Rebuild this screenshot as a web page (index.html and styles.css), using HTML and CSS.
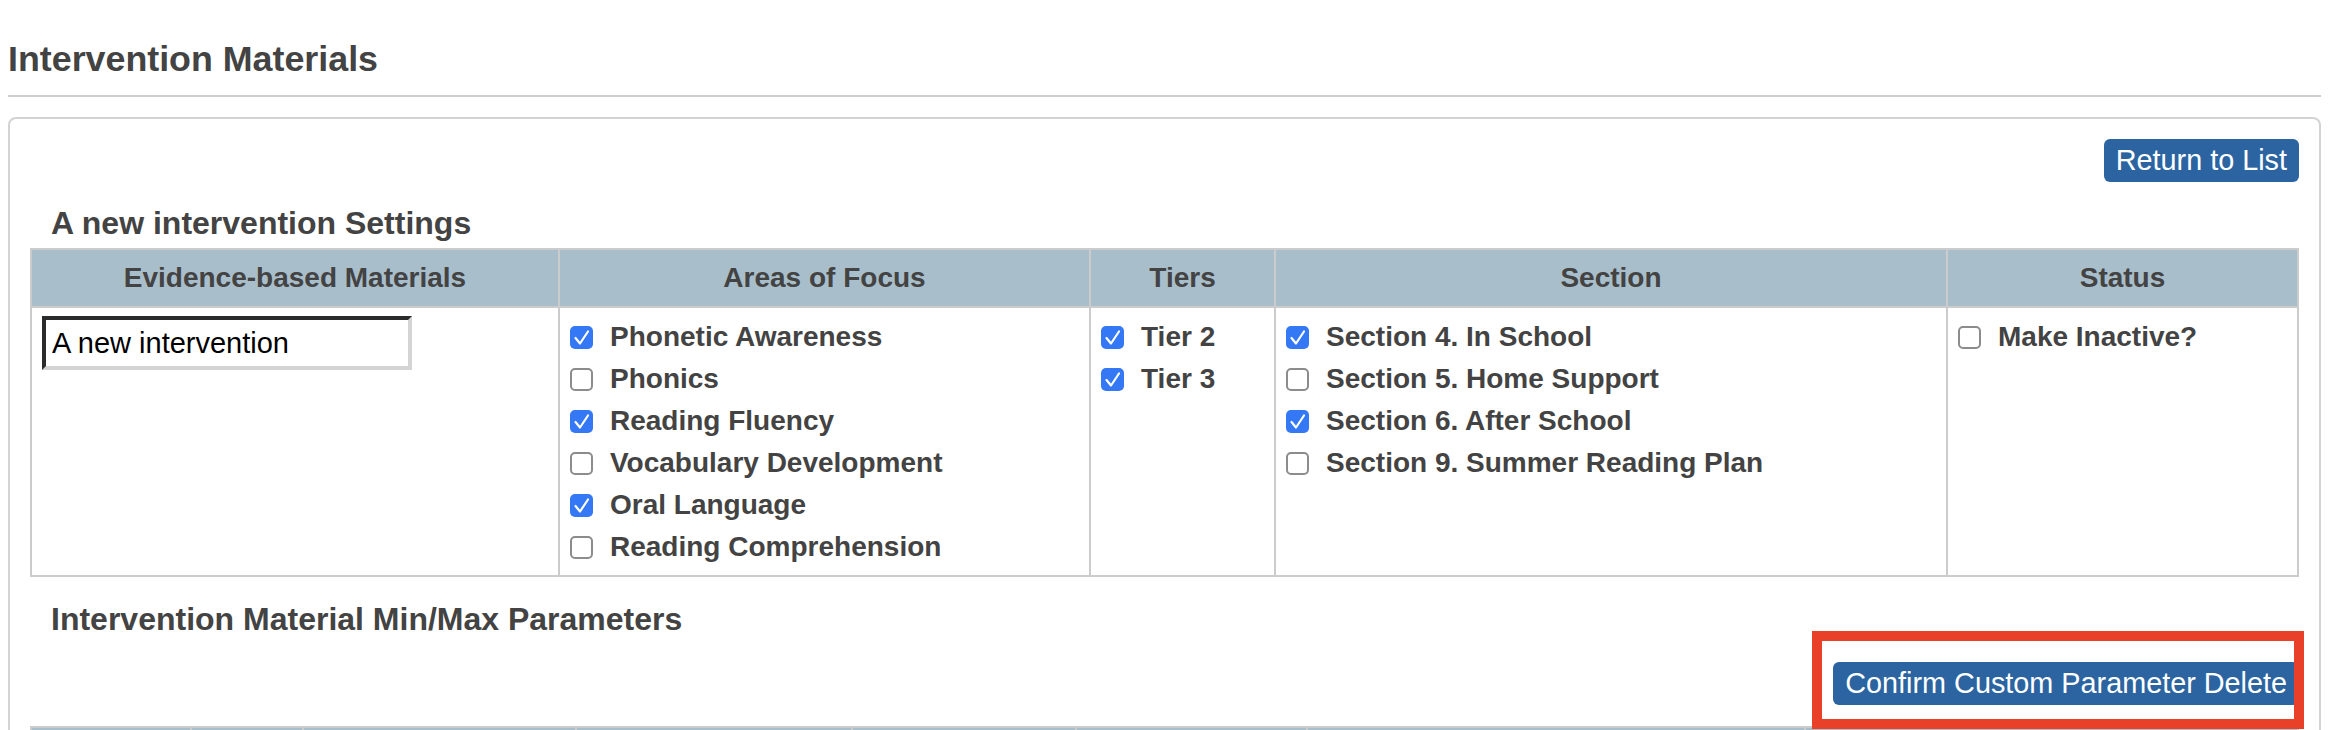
FILE: index.html
```html
<!DOCTYPE html>
<html lang="en">
<head>
<meta charset="utf-8">
<title>Intervention Materials</title>
<link rel="stylesheet" href="styles.css">
</head>
<body>
<div class="page">
  <h1 class="page-title">Intervention Materials</h1>
  <div class="panel">
    <div class="actions">
      <button class="btn" type="button">Return to List</button>
    </div>
    <h3 class="section-title first">A new intervention Settings</h3>
    <div class="grid settings">
      <div class="th">Evidence-based Materials</div>
      <div class="th">Areas of Focus</div>
      <div class="th">Tiers</div>
      <div class="th">Section</div>
      <div class="th">Status</div>

      <div class="td">
        <input class="name-input" type="text" value="A new intervention">
      </div>
      <div class="td">
        <ul class="checks">
          <li><span class="cb on"><svg viewBox="0 0 23 23"><path d="M5.5 12 L10 17.5 L18 5.5"/></svg></span><span class="lbl">Phonetic Awareness</span></li>
          <li><span class="cb"></span><span class="lbl">Phonics</span></li>
          <li><span class="cb on"><svg viewBox="0 0 23 23"><path d="M5.5 12 L10 17.5 L18 5.5"/></svg></span><span class="lbl">Reading Fluency</span></li>
          <li><span class="cb"></span><span class="lbl">Vocabulary Development</span></li>
          <li><span class="cb on"><svg viewBox="0 0 23 23"><path d="M5.5 12 L10 17.5 L18 5.5"/></svg></span><span class="lbl">Oral Language</span></li>
          <li><span class="cb"></span><span class="lbl">Reading Comprehension</span></li>
        </ul>
      </div>
      <div class="td">
        <ul class="checks">
          <li><span class="cb on"><svg viewBox="0 0 23 23"><path d="M5.5 12 L10 17.5 L18 5.5"/></svg></span><span class="lbl">Tier 2</span></li>
          <li><span class="cb on"><svg viewBox="0 0 23 23"><path d="M5.5 12 L10 17.5 L18 5.5"/></svg></span><span class="lbl">Tier 3</span></li>
        </ul>
      </div>
      <div class="td">
        <ul class="checks">
          <li><span class="cb on"><svg viewBox="0 0 23 23"><path d="M5.5 12 L10 17.5 L18 5.5"/></svg></span><span class="lbl">Section 4. In School</span></li>
          <li><span class="cb"></span><span class="lbl">Section 5. Home Support</span></li>
          <li><span class="cb on"><svg viewBox="0 0 23 23"><path d="M5.5 12 L10 17.5 L18 5.5"/></svg></span><span class="lbl">Section 6. After School</span></li>
          <li><span class="cb"></span><span class="lbl">Section 9. Summer Reading Plan</span></li>
        </ul>
      </div>
      <div class="td">
        <ul class="checks">
          <li><span class="cb"></span><span class="lbl">Make Inactive?</span></li>
        </ul>
      </div>
    </div>

    <h3 class="section-title second">Intervention Material Min/Max Parameters</h3>
    <div class="actions confirm-row">
      <button class="btn" type="button">Confirm Custom Parameter Delete</button>
      <span class="highlight"></span>
    </div>
    <div class="grid params">
      <div class="th"></div>
      <div class="th"></div>
      <div class="th"></div>
      <div class="th"></div>
      <div class="th"></div>
      <div class="th"></div>
      <div class="th"></div>
      <div class="th"></div>
    </div>
  </div>
</div>
</body>
</html>
```

FILE: styles.css
```css
html {
  overflow: hidden;
}

body {
  margin: 0;
  background: #ffffff;
  font-family: "Liberation Sans", Arial, Helvetica, sans-serif;
  color: #444444;
}

.page {
  padding: 38px 11px 0 8px;
}

.page-title {
  margin: 0;
  font-size: 35.8px;
  line-height: 42px;
  font-weight: bold;
  color: #434343;
  padding-bottom: 15px;
  border-bottom: 2px solid #cdcdcd;
}

.panel {
  margin-top: 20px;
  border: 2px solid #d3d3d3;
  border-radius: 8px;
  padding: 20px 20px 0 20px;
  min-height: 600px;
}

.actions {
  display: flex;
  justify-content: flex-end;
}

.btn {
  height: 43px;
  padding: 0 12px;
  border: none;
  border-radius: 6px;
  background: #2b64a0;
  color: #ffffff;
  font-family: "Liberation Sans", Arial, Helvetica, sans-serif;
  font-size: 28.8px;
  line-height: 43px;
  cursor: pointer;
}

.section-title {
  margin: 0;
  padding-left: 21px;
  font-size: 32px;
  line-height: 36px;
  font-weight: bold;
  color: #434343;
}

.section-title.first {
  margin: 23px 0 7px 0;
}

.section-title.second {
  margin: 24px 0 25px 0;
}

.grid {
  display: grid;
  border-top: 2px solid #cccccc;
  border-left: 2px solid #cccccc;
}

.settings {
  grid-template-columns: 528px 531px 185px 672px 351px;
}

.params {
  margin-top: 21px;
  grid-template-columns: 160px 112px 273px 276px 224px 231px 498px 493px;
}

.th {
  background: #a9becb;
  border-right: 2px solid #cccccc;
  border-bottom: 2px solid #cccccc;
  padding: 11px 10px;
  font-size: 28px;
  line-height: 34px;
  font-weight: bold;
  text-align: center;
  color: #434343;
}

.params .th {
  height: 34px;
}

.td {
  border-right: 2px solid #cccccc;
  border-bottom: 2px solid #cccccc;
  padding: 8px 10px 7px 10px;
}

.name-input {
  display: block;
  box-sizing: border-box;
  width: 370px;
  height: 54px;
  margin: 0;
  padding: 0 6px;
  border-style: solid;
  border-width: 4px;
  border-color: #2b2b2b #d4d4d4 #d4d4d4 #2b2b2b;
  background: #ffffff;
  font-family: "Liberation Sans", Arial, Helvetica, sans-serif;
  font-size: 29px;
  color: #000000;
  outline: none;
}

.checks {
  list-style: none;
  margin: 0;
  padding: 0;
}

.checks li {
  display: flex;
  align-items: center;
  height: 42px;
  gap: 17px;
}

.cb {
  flex: none;
  box-sizing: border-box;
  width: 23px;
  height: 23px;
  border: 2px solid #8c8c8c;
  border-radius: 5px;
  background: #ffffff;
  display: flex;
  align-items: center;
  justify-content: center;
}

.cb.on {
  border: none;
  background: #3478f6;
}

.cb svg {
  width: 23px;
  height: 23px;
  display: block;
}

.cb svg path {
  fill: none;
  stroke: #ffffff;
  stroke-width: 2.2;
  stroke-linecap: round;
  stroke-linejoin: round;
}

.lbl {
  font-size: 28px;
  line-height: 42px;
  font-weight: bold;
  color: #434343;
  white-space: nowrap;
}

.confirm-row {
  position: relative;
}

.highlight {
  position: absolute;
  top: -31px;
  right: -5px;
  width: 492px;
  height: 98px;
  box-sizing: border-box;
  border: 10px solid #e9402a;
  z-index: 2;
  pointer-events: none;
}
```
